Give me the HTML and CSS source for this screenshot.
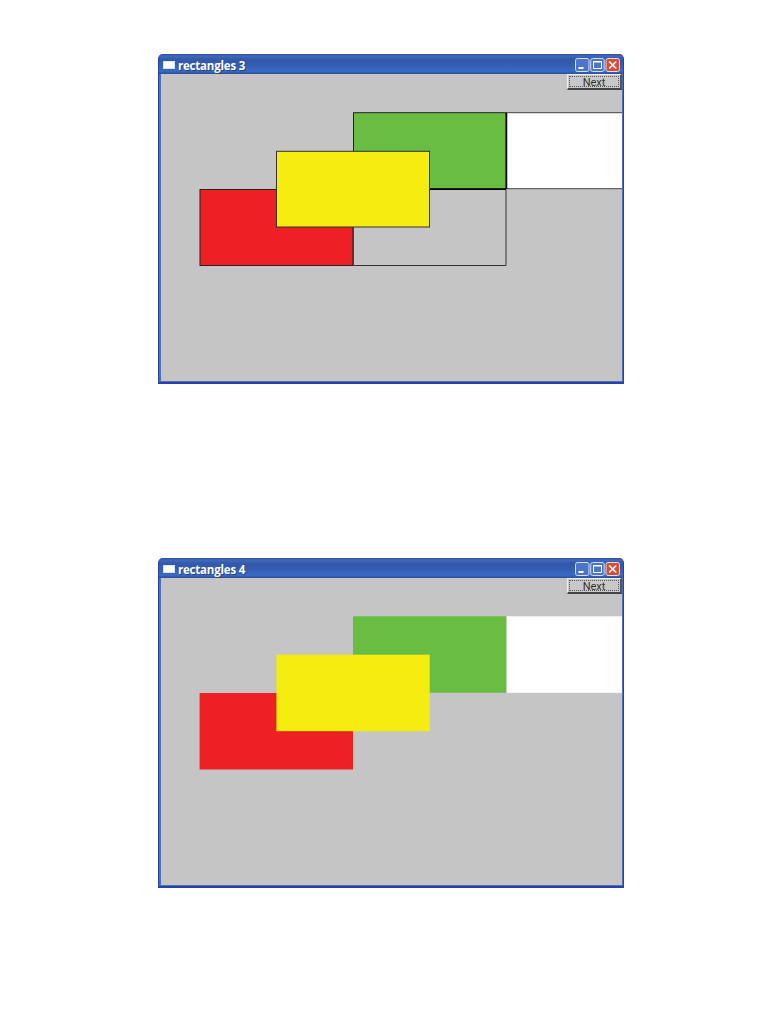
FILE: index.html
```html
<!DOCTYPE html>
<html lang="en">
<head>
<meta charset="utf-8">
<title>rectangles</title>
<link rel="stylesheet" href="styles.css">
</head>
<body>
<main class="page">
  <section class="window">
    <header class="titlebar">
      <span class="app-icon"></span>
      <h1 class="title">rectangles 3</h1>
      <svg class="controls" width="47" height="16" viewBox="0 0 47 16">
        <g stroke="#d4def4">
          <rect x=".5" y="1.5" width="13.5" height="13" rx="2" fill="#4c74c8"/>
          <rect x="15.7" y="1.5" width="13.5" height="13" rx="2" fill="#4c74c8"/>
          <rect x="31" y="1.5" width="13.5" height="13" rx="2" fill="#dd4c2c"/>
        </g>
        <path d="M3.5 11h5" stroke="#fff" stroke-width="2"/>
        <path d="M18.5 4.5h8v7h-8z M18 5h9" stroke="#fff" fill="none"/>
        <path d="M34.2 4.5l7 7M41.2 4.5l-7 7" stroke="#fff" stroke-width="1.7"/>
      </svg>
    </header>
    <div class="client">
      <button class="next"><span class="focus">Next</span></button>
      <svg class="canvas" width="461" height="307" viewBox="161 74 461 307">
        <rect x="506.5" y="112.7" width="153" height="76" fill="#fff" stroke="#444"/>
        <rect x="353.5" y="112.7" width="152.5" height="76" fill="#68bd42" stroke="#222"/>
        <path d="M506.5 113v76" stroke="#000" stroke-width="1.5"/>
        <path d="M353 189.3h153" stroke="#000" stroke-width="1.5"/>
        <rect x="200" y="189.5" width="153" height="76" fill="#ee2024" stroke="#222"/>
        <path d="M506 190v75.5H353.3V190" fill="none" stroke="#333"/>
        <rect x="276.5" y="151.3" width="153" height="75.7" fill="#f6ed10" stroke="#333"/>
      </svg>
    </div>
  </section>
  <section class="window">
    <header class="titlebar">
      <span class="app-icon"></span>
      <h1 class="title">rectangles 4</h1>
      <svg class="controls" width="47" height="16" viewBox="0 0 47 16">
        <g stroke="#d4def4">
          <rect x=".5" y="1.5" width="13.5" height="13" rx="2" fill="#4c74c8"/>
          <rect x="15.7" y="1.5" width="13.5" height="13" rx="2" fill="#4c74c8"/>
          <rect x="31" y="1.5" width="13.5" height="13" rx="2" fill="#dd4c2c"/>
        </g>
        <path d="M3.5 11h5" stroke="#fff" stroke-width="2"/>
        <path d="M18.5 4.5h8v7h-8z M18 5h9" stroke="#fff" fill="none"/>
        <path d="M34.2 4.5l7 7M41.2 4.5l-7 7" stroke="#fff" stroke-width="1.7"/>
      </svg>
    </header>
    <div class="client">
      <button class="next"><span class="focus">Next</span></button>
      <svg class="canvas" width="461" height="307" viewBox="161 578 461 307">
        <rect x="506.5" y="616.3" width="153" height="76.5" fill="#fff"/>
        <rect x="353" y="616.3" width="153.3" height="76.5" fill="#68bd42"/>
        <rect x="199.6" y="693" width="153.4" height="76.5" fill="#ee2024"/>
        <rect x="276.4" y="654.7" width="153.3" height="76.5" fill="#f6ed10"/>
      </svg>
    </div>
  </section>
</main>
</body>
</html>
```
FILE: styles.css
```css
* { box-sizing: border-box; }

body {
  margin: 0;
  background: #fff;
}

.page {
  display: flex;
  flex-direction: column;
  gap: 174px;
  width: 782px;
  height: 1012px;
  padding: 54px 0 0 158px;
}

.window {
  display: flex;
  flex-direction: column;
  width: 466px;
  height: 330px;
  border: solid #2b41a0;
  border-width: 0 1px 2px 1px;
  border-radius: 5px 5px 0 0;
  background: #2b41a0;
  overflow: hidden;
}

.titlebar {
  display: flex;
  align-items: center;
  height: 20px;
  padding: 2px 1px 0 4px;
  background: linear-gradient(#2e4da0 0, #3f69bc 2px, #3158a8 6px, #345fb5 12px, #3b6bc5 17px, #2d4e9c 20px);
}

.app-icon {
  width: 12px;
  height: 8px;
  border: 1px solid #d8e4ee;
  background: #fff;
}

.title {
  flex: 1;
  margin: 0 0 0 3px;
  padding-top: 1px;
  color: #fff;
  font: 700 11.5px/18px "Open Sans", "Noto Sans", sans-serif;
  letter-spacing: -.2px;
  text-shadow: 1px 1px 0 #25427f;
  white-space: nowrap;
}

.controls {
  flex: none;
}

.client {
  position: relative;
  width: 464px;
  height: 308px;
  border: solid #4c6fc4;
  border-width: 0 1px 1px 2px;
  background: #c5c5c5;
}

.canvas {
  display: block;
  width: 461px;
  height: 307px;
}

.next {
  position: absolute;
  top: 0;
  right: 0;
  width: 55px;
  height: 16px;
  padding: 1px;
  border: solid;
  border-width: 1px 2px 2px 1px;
  border-color: #eee #555 #444 #eee;
  background: #c9c9c9;
}

.focus {
  display: block;
  height: 11px;
  border: 1px dotted #555;
  color: #333;
  font: 11px/12px Roboto, "Liberation Sans", sans-serif;
  text-align: center;
}
```
